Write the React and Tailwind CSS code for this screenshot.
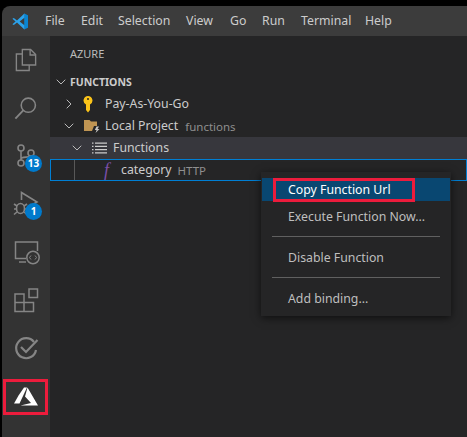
import { ChevronDown, ChevronRight } from 'lucide-react'

const MENU = [
  { label: 'File', width: 36 },
  { label: 'Edit', width: 37 },
  { label: 'Selection', width: 68 },
  { label: 'View', width: 44 },
  { label: 'Go', width: 32 },
  { label: 'Run', width: 39 },
  { label: 'Terminal', width: 64 },
  { label: 'Help', width: 40 },
]

function VsCodeLogo() {
  return (
    <svg width="17" height="17" viewBox="0 0 17 17" className="ml-[10px] mr-[16px] shrink-0">
      <path d="M12.2 0.6 L16 2.2 L16 14.8 L12.2 16.4 Z" fill="#0a84d0" />
      <path d="M12.4 0.5 L5 7.4 L1.8 4.9 L0.4 5.7 L3.6 8.5 L0.4 11.3 L1.8 12.1 L5 9.6 L12.4 16.5 L12.4 12.2 L7.6 8.5 L12.4 4.8 Z" fill="#2ba3ec" />
    </svg>
  )
}

function ActivityIcon({ children, badge }) {
  return (
    <div className="relative h-[48px] flex items-center justify-center">
      {children}
      {badge && (
        <span className="absolute left-[23px] top-[23px] w-[17px] h-[17px] rounded-full bg-[#007acc] text-white text-[10px] font-bold leading-[17px] text-center">
          {badge}
        </span>
      )}
    </div>
  )
}

function ActivityBar() {
  const stroke = '#858585'
  return (
    <div className="w-[48px] shrink-0 bg-[#333333] flex flex-col">
      <ActivityIcon>
        <svg width="22" height="24" viewBox="0 0 24 26" fill="none" stroke={stroke} strokeWidth="1.5">
          <path d="M8 1.5 H17 L22.5 7 V18.5 H8 Z" />
          <path d="M16.5 1.5 V7.5 H22.5" />
          <path d="M8 6.5 H1.5 V24.5 H15.5 V18.5" />
        </svg>
      </ActivityIcon>
      <ActivityIcon>
        <svg width="24" height="24" viewBox="0 0 26 26" fill="none" stroke={stroke} strokeWidth="1.7">
          <circle cx="15.5" cy="10" r="7.7" />
          <path d="M10 15.5 L1.5 24.5" strokeWidth="2" />
        </svg>
      </ActivityIcon>
      <ActivityIcon badge="13">
        <svg width="20" height="24" viewBox="0 0 20 24" fill="none" stroke={stroke} strokeWidth="1.6" className="ml-[2px]">
          <circle cx="4" cy="4" r="3" />
          <circle cx="4" cy="19" r="3" />
          <circle cx="14" cy="9" r="3" />
          <path d="M4 7 V16 M4 15 C4 12 12 14 14 12" />
        </svg>
      </ActivityIcon>
      <ActivityIcon badge="1">
        <svg width="26" height="26" viewBox="0 0 26 26" fill="none" stroke={stroke} strokeWidth="1.6">
          <path d="M8.5 9 V1.5 L24 11 L17 15" />
          <ellipse cx="7.5" cy="17.5" rx="4" ry="5" />
          <path d="M1 13 L4 15 M1 18 H3.5 M1 23.5 L4 21 M14 13 L11 15 M14 18 H11.5 M14 23.5 L11 21" />
        </svg>
      </ActivityIcon>
      <ActivityIcon>
        <svg width="26" height="24" viewBox="0 0 26 24" fill="none" stroke={stroke} strokeWidth="1.5" className="ml-[1px] mt-[2px]">
          <path d="M12 17.5 H1.5 V1 H23.5 V10" />
          <path d="M5 21 H12" />
          <circle cx="19" cy="16.5" r="6.2" />
          <path d="M17 14.5 L15.5 16.5 L17 18.5 M21 14.5 L22.5 16.5 L21 18.5" strokeWidth="1" />
        </svg>
      </ActivityIcon>
      <ActivityIcon>
        <svg width="25" height="25" viewBox="0 0 25 25" fill="none" stroke={stroke} strokeWidth="1.5">
          <path d="M1 6 H10 V23.5 H1 Z M1 14.5 H19.5 V23.5 H10" />
          <rect x="15" y="1" width="8.5" height="8.5" />
        </svg>
      </ActivityIcon>
      <ActivityIcon>
        <svg width="25" height="25" viewBox="0 0 25 25" fill="none" stroke={stroke} strokeWidth="2.2">
          <path d="M20 6 A10 10 0 1 0 22 14" />
          <path d="M7 11 L12 16 L23.5 4" />
        </svg>
      </ActivityIcon>
      <ActivityIcon>
        <svg width="24" height="19" viewBox="0 0 24 19" fill="#ffffff">
          <path d="M10 0.5 L13 0.5 L5.5 16.5 L0 16.5 L4.5 8.5 Z" />
          <path d="M13.5 0.5 L24 18.5 L6.5 18.5 L17 16 L11 9.5 Z" />
        </svg>
      </ActivityIcon>
    </div>
  )
}

function Row({ indent, active, children }) {
  return (
    <div
      className={`h-[22px] flex items-center text-[12.3px] text-[#cccccc] whitespace-nowrap ${active ? 'bg-[#37373d]' : ''}`}
      style={{ paddingLeft: indent }}
    >
      {children}
    </div>
  )
}

function KeyIcon() {
  return (
    <svg width="10" height="17" viewBox="0 0 10 17" className="ml-[6px] mr-[12px]">
      <path fillRule="evenodd" d="M5 0 A4.5 4.5 0 0 1 7 8.5 V14 L5 16.5 L3 14 V8.5 A4.5 4.5 0 0 1 5 0 Z M5 2 A1 1 0 1 0 5 4 A1 1 0 1 0 5 2 Z" fill="#fcc419" />
    </svg>
  )
}

function FolderIcon() {
  return (
    <svg width="16" height="14" viewBox="0 0 16 14" className="mr-[5px]">
      <path d="M0 1 H5.5 L7 2.5 H13 V7 H10 L8 12 H0 Z" fill="#c09553" />
      <path d="M12.5 7.5 H15 L13.5 10 H15.5 L11.5 14 L12.6 11 H10.8 Z" fill="#c5c5c5" />
    </svg>
  )
}

function ListIcon() {
  return (
    <svg width="15" height="12" viewBox="0 0 15 12" fill="#cccccc" className="ml-[3px] mr-[6px]">
      <path d="M0 0.5 H1.5 V1.8 H0 Z M3 0.5 H15 V1.8 H3 Z M0 3.8 H1.5 V5.1 H0 Z M3 3.8 H15 V5.1 H3 Z M0 7 H1.5 V8.3 H0 Z M3 7 H15 V8.3 H3 Z M0 10.2 H1.5 V11.5 H0 Z M3 10.2 H15 V11.5 H3 Z" />
    </svg>
  )
}

function Sidebar() {
  return (
    <div className="relative flex-1 min-w-0 bg-[#252526] overflow-hidden">
      <div className="h-[35px] pt-[1px] flex items-center pl-[20px] text-[11px] text-[#bbbbbb]">AZURE</div>
      <div className="h-[22px] flex items-center pl-[3px] text-[10.5px] font-bold text-[#cccccc]">
        <ChevronDown size={16} strokeWidth={1.4} className="mr-[1px] text-[#c5c5c5]" />
        <span className="pt-[1px]">FUNCTIONS</span>
      </div>
      <Row indent={11}>
        <ChevronRight size={16} strokeWidth={1.4} className="text-[#c5c5c5]" />
        <KeyIcon />
        <span className="pt-[1px]">Pay-As-You-Go</span>
      </Row>
      <Row indent={11}>
        <ChevronDown size={16} strokeWidth={1.4} className="mr-[7px] text-[#c5c5c5]" />
        <FolderIcon />
        <span className="pt-[1px]">Local Project</span>
        <span className="ml-[7px] pt-[1px] text-[11.5px] text-[#8f8f8f]">functions</span>
      </Row>
      <Row indent={19} active>
        <ChevronDown size={16} strokeWidth={1.4} className="mr-[4px] text-[#c5c5c5]" />
        <ListIcon />
        <span className="pt-[1px]">Functions</span>
      </Row>
      <div className="h-[22px] flex items-center border border-[#007fd4] text-[12.3px] text-[#cccccc] whitespace-nowrap">
        <div className="ml-[23px] w-[1px] h-full bg-[#585858]" />
        <span className="ml-[29px] w-[17px] text-[18px] italic leading-none text-[#7b4fa8] font-['Liberation_Serif',serif]">f</span>
        <span className="pt-[1px]">category</span>
        <span className="ml-[6px] pt-[1px] text-[11.5px] text-[#8f8f8f]">HTTP</span>
      </div>
      <ContextMenu />
    </div>
  )
}

function MenuRow({ children, active, className = '' }) {
  return (
    <div className={`relative h-[23px] pt-[1px] pl-[26px] flex items-center text-[12.3px] ${active ? 'bg-[#094771] text-white' : 'text-[#bfbfbf]'} ${className}`}>
      {children}
    </div>
  )
}

function ContextMenu() {
  return (
    <div className="absolute left-[211px] top-[136px] w-[190px] h-[144px] pt-[6px] px-[1px] bg-[#252526] shadow-[0_2px_8px_rgba(0,0,0,0.6)]">
      <MenuRow active>
        Copy Function Url
        <div className="absolute left-[11px] top-0 w-[142px] h-[24px] border-[3px] border-[#ec1c3c]" />
      </MenuRow>
      <MenuRow className="mt-[4px]">Execute Function Now...</MenuRow>
      <div className="mx-[10px] mt-[8px] h-[1px] bg-[#606060]" />
      <MenuRow className="mt-[9px]">Disable Function</MenuRow>
      <div className="mx-[10px] mt-[8px] h-[1px] bg-[#606060]" />
      <MenuRow className="mt-[9px]">Add binding...</MenuRow>
    </div>
  )
}

export default function App() {
  return (
    <div className="w-[467px] h-[437px] bg-black pt-[6px] pl-[2px] overflow-hidden font-['Noto_Sans',sans-serif]">
      <div className="h-full flex flex-col rounded-tl-[8px] overflow-hidden">
        <div className="h-[30px] pt-[1px] shrink-0 bg-[#3c3c3c] flex items-center text-[12.3px] text-[#cccccc]">
          <VsCodeLogo />
          {MENU.map(m => (
            <span key={m.label} style={{ width: m.width }}>{m.label}</span>
          ))}
        </div>
        <div className="flex-1 flex min-h-0">
          <ActivityBar />
          <Sidebar />
        </div>
      </div>
      <div className="absolute left-[3px] top-[379px] w-[45px] h-[36px] border-[3px] border-[#ec1c3c]" />
    </div>
  )
}
